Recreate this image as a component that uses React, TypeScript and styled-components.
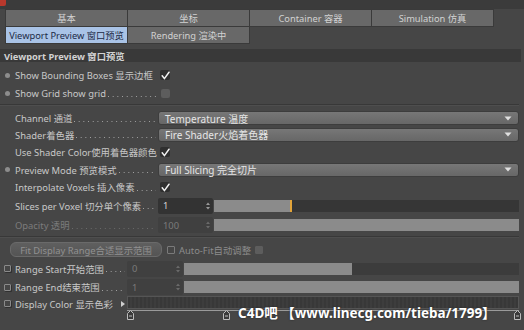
import React from 'react';
import styled, { createGlobalStyle } from 'styled-components';

const GlobalStyle = createGlobalStyle`
  html, body {
    margin: 0;
    padding: 0;
    background: #464646;
  }
  body {
    font-family: "Noto Sans", "Noto Sans CJK SC", sans-serif;
    font-size: 9px;
    color: #cacaca;
  }
`;

const Panel = styled.div`
  position: relative;
  width: 524px;
  height: 330px;
  overflow: hidden;
  background: #464646;
`;

const TopStrip = styled.div`
  height: 9px;
  background: #3b3b3b;
  display: flex;
`;

const RedCorner = styled.div`
  width: 6px;
  height: 6px;
  background: #b8382c;
  border-bottom-right-radius: 2px;
`;

const Tabs = styled.div`
  margin-left: 5px;
  display: flex;
  flex-direction: column;
`;

const TabRow = styled.div`
  display: flex;
  & + & {
    margin-top: -1px;
  }
`;

const Tab = styled.div<{ $active?: boolean }>`
  width: 121px;
  height: 16px;
  border: 1px solid #3a3a3a;
  background: ${p => (p.$active ? '#a9c3e6' : '#686868')};
  color: ${p => (p.$active ? '#1c2a45' : '#d2d2d2')};
  display: flex;
  align-items: center;
  justify-content: center;
  white-space: nowrap;
  font-size: 9.3px;
  & + & {
    margin-left: -1px;
  }
`;

const Header = styled.div`
  margin-top: 5px;
  height: 13px;
  margin-right: 3px;
  background: #393939;
  padding-left: 4px;
  display: flex;
  align-items: center;
  font-weight: 700;
  font-size: 9.3px;
  color: #d2d2d2;
`;

const Body = styled.div`
  padding: 4px 5px 0 0;
  display: flex;
  flex-direction: column;
  font-size: 9.4px;
`;

const Row = styled.div<{ $h: number; $top?: boolean }>`
  height: ${p => p.$h}px;
  display: flex;
  align-items: ${p => (p.$top ? 'flex-start' : 'center')};
`;

const MarkerSlot = styled.div<{ $mt?: number }>`
  width: 15px;
  flex-shrink: 0;
  display: flex;
  justify-content: center;
  padding-right: 1px;
  box-sizing: border-box;
  margin-top: ${p => p.$mt ?? 0}px;
`;

const Bullet = styled.span`
  width: 5px;
  height: 5px;
  border-radius: 50%;
  background: #8d8d8d;
`;

const KeyBox = styled.span`
  width: 5px;
  height: 5px;
  border: 1px solid #8a8a8a;
  border-radius: 1px;
  box-shadow: 1px 1px 0 #303030;
`;

const Label = styled.div<{ $w: number; $dim?: boolean; $mt?: number }>`
  width: ${p => p.$w}px;
  flex-shrink: 0;
  display: flex;
  align-items: center;
  white-space: nowrap;
  overflow: hidden;
  margin-top: ${p => p.$mt ?? 0}px;
  color: ${p => (p.$dim ? '#7c7c7c' : '#c8c8c8')};
`;

const LabelText = styled.span`
  flex-shrink: 0;
`;

const Leader = styled.span<{ $dim?: boolean }>`
  flex: 1;
  min-width: 0;
  height: 1px;
  margin: 0 2px 0 2px;
  transform: translateY(3px);
  background-image: linear-gradient(90deg, ${p => (p.$dim ? '#6c6c6c' : '#a4a4a4')} 0 1px, transparent 1px);
  background-size: 4.7px 1px;
  background-repeat: repeat-x;
`;

const Value = styled.div`
  flex: 1;
  display: flex;
  align-items: center;
  min-width: 0;
`;

const CheckBox = styled.span<{ $on?: boolean }>`
  margin-left: ${p => (p.$on ? 2 : 3)}px;
  width: ${p => (p.$on ? 10 : 9)}px;
  height: ${p => (p.$on ? 10 : 9)}px;
  border-radius: 2px;
  background: ${p => (p.$on ? '#2f2f2f' : '#5d5d5d')};
  display: flex;
  align-items: center;
  justify-content: center;
`;

const Dropdown = styled.div`
  flex: 1;
  height: 14px;
  box-sizing: border-box;
  border-radius: 3px;
  background: linear-gradient(#777777, #676767);
  border: 1px solid #3d3d3d;
  color: #e6e6e6;
  font-size: 10px;
  display: flex;
  align-items: center;
  justify-content: space-between;
  padding: 0 6px;
  white-space: nowrap;
`;

const NumberField = styled.div<{ $dim?: boolean; $w?: number }>`
  width: ${p => p.$w ?? 55}px;
  height: 16px;
  box-sizing: border-box;
  flex-shrink: 0;
  border-radius: 2px;
  background: ${p => (p.$dim ? '#404040' : '#333333')};
  color: ${p => (p.$dim ? '#7a7a7a' : '#d4d4d4')};
  display: flex;
  align-items: center;
  justify-content: space-between;
  padding: 0 3px 0 5px;
`;

const Slider = styled.div<{ $dark?: boolean }>`
  flex: 1;
  height: 12px;
  margin-left: 1px;
  background: ${p => (p.$dark ? '#363636' : '#3c3c3c')};
  display: flex;
`;

const SliderFill = styled.div<{ $pct: number; $marker?: boolean }>`
  width: ${p => p.$pct}%;
  height: 100%;
  background: #8b8b8b;
  box-sizing: border-box;
  border-right: ${p => (p.$marker ? '2px solid #e2a43a' : 'none')};
`;

const Separator = styled.div<{ $mt: number; $mb: number }>`
  height: 1px;
  background: #383838;
  border-bottom: 1px solid #4e4e4e;
  margin: ${p => p.$mt}px 0 ${p => p.$mb}px 0;
`;

const FitButton = styled.div`
  margin-left: 10px;
  width: 152px;
  height: 15px;
  box-sizing: border-box;
  border-radius: 6px;
  border: 1px solid #6a6a6a;
  background: linear-gradient(#5f5f5f, #545454);
  color: #919191;
  display: flex;
  align-items: center;
  justify-content: center;
  white-space: nowrap;
`;

const SmallBox = styled.span<{ $fill?: boolean }>`
  width: 6px;
  height: 6px;
  border: 1px solid ${p => (p.$fill ? '#5d5d5d' : '#7a7a7a')};
  background: ${p => (p.$fill ? '#5d5d5d' : 'transparent')};
  border-radius: 1px;
  flex-shrink: 0;
`;

const AutoFit = styled.div`
  margin-left: 5px;
  display: flex;
  align-items: center;
  gap: 4px;
  color: #8c8c8c;
  white-space: nowrap;
`;

const Arrow = styled.span`
  margin-left: auto;
  margin-right: 2px;
  width: 0;
  height: 0;
  border-top: 3px solid transparent;
  border-bottom: 3px solid transparent;
  border-left: 4px solid #d0d0d0;
`;

const GradientWrap = styled.div`
  flex: 1;
  display: flex;
  flex-direction: column;
  position: relative;
  height: 25px;
`;

const GradientBar = styled.div`
  height: 13px;
  box-sizing: border-box;
  border: 1px solid #555555;
  background: repeating-linear-gradient(90deg, #383838 0 2px, #3d3d3d 2px 4px);
`;

const KnobLine = styled.div`
  margin-top: 1px;
  height: 1px;
  background: #9a9a9a;
`;

const Knob = styled.span<{ $x: number }>`
  position: absolute;
  top: 14px;
  left: ${p => p.$x}px;
  width: 7px;
  height: 10px;
  display: flex;
`;

const Watermark = styled.div`
  position: absolute;
  left: 238px;
  top: 302px;
  font-family: "Noto Sans", "Noto Sans CJK SC", sans-serif;
  font-weight: 700;
  font-size: 13.5px;
  color: #ffffff;
  white-space: nowrap;
  text-shadow: 0 0 2px #222;
`;

const Check = () => (
  <svg width="9" height="9" viewBox="0 0 9 9">
    <path d="M1.2 4.8 L3.4 7.6 L8 1.2" stroke="#f2f2f2" strokeWidth="1.5" fill="none" strokeLinecap="round" />
  </svg>
);

const DownArrow = () => (
  <svg width="8" height="5" viewBox="0 0 8 5">
    <path d="M0.5 0.5 H7.5 L4 4.5 Z" fill="#e0e0e0" />
  </svg>
);

const Spin = ({ color }: { color: string }) => (
  <svg width="4" height="8" viewBox="0 0 4 8">
    <path d="M0 3 L2 0.5 L4 3 Z M0 5 L2 7.5 L4 5 Z" fill={color} />
  </svg>
);

const KnobIcon = () => (
  <svg width="7" height="10" viewBox="0 0 7 10">
    <path d="M0.5 9.5 V3.5 L3.5 0.5 L6.5 3.5 V9.5 Z" fill="#3a3a3a" stroke="#bdbdbd" strokeWidth="1" />
    <path d="M2 6 H5" stroke="#bdbdbd" strokeWidth="1" />
  </svg>
);

type Marker = 'bullet' | 'key' | 'none';

const Field = ({
  marker,
  text,
  w,
  dim,
  dots = true,
}: {
  marker: Marker;
  text: string;
  w: number;
  dim?: boolean;
  dots?: boolean;
}) => (
  <>
    <MarkerSlot>
      {marker === 'bullet' && <Bullet />}
      {marker === 'key' && <KeyBox />}
    </MarkerSlot>
    <Label $w={w} $dim={dim}>
      <LabelText>{text}</LabelText>
      {dots && <Leader $dim={dim} />}
    </Label>
  </>
);

const Checked = () => (
  <Value>
    <CheckBox $on>
      <Check />
    </CheckBox>
  </Value>
);

const App = () => {
  return (
    <Panel>
      <GlobalStyle />
      <TopStrip>
        <RedCorner />
      </TopStrip>
      <Tabs>
        <TabRow>
          <Tab>基本</Tab>
          <Tab>坐标</Tab>
          <Tab>Container 容器</Tab>
          <Tab>Simulation 仿真</Tab>
        </TabRow>
        <TabRow>
          <Tab $active>Viewport Preview 窗口预览</Tab>
          <Tab>Rendering 渲染中</Tab>
        </TabRow>
      </Tabs>
      <Header>Viewport Preview 窗口预览</Header>
      <Body>
        <Row $h={18}>
          <Field marker="bullet" text="Show Bounding Boxes 显示边框" w={143} dots={false} />
          <Checked />
        </Row>
        <Row $h={18}>
          <Field marker="bullet" text="Show Grid show grid" w={143} />
          <Value>
            <CheckBox />
          </Value>
        </Row>
        <Separator $mt={2} $mb={4} />
        <Row $h={16}>
          <Field marker="none" text="Channel 通道" w={143} />
          <Dropdown>
            Temperature 温度
            <DownArrow />
          </Dropdown>
        </Row>
        <Row $h={17}>
          <Field marker="none" text="Shader着色器" w={143} />
          <Dropdown>
            Fire Shader火焰着色器
            <DownArrow />
          </Dropdown>
        </Row>
        <Row $h={18}>
          <Field marker="none" text="Use Shader Color使用着色器颜色" w={145} dots={false} />
          <CheckBox $on style={{ marginLeft: 0 }}>
            <Check />
          </CheckBox>
        </Row>
        <Row $h={17}>
          <Field marker="bullet" text="Preview Mode 预览模式" w={143} />
          <Dropdown>
            Full Slicing 完全切片
            <DownArrow />
          </Dropdown>
        </Row>
        <Row $h={18}>
          <Field marker="none" text="Interpolate Voxels 插入像素" w={143} />
          <Checked />
        </Row>
        <Row $h={19}>
          <Field marker="none" text="Slices per Voxel 切分单个像素" w={143} />
          <Value>
            <NumberField>
              1
              <Spin color="#9a9a9a" />
            </NumberField>
            <Slider $dark>
              <SliderFill $pct={25.6} $marker />
            </Slider>
          </Value>
        </Row>
        <Row $h={20}>
          <Field marker="none" text="Opacity 透明" w={143} dim />
          <Value>
            <NumberField $dim>
              100
              <Spin color="#6a6a6a" />
            </NumberField>
            <Slider>
              <SliderFill $pct={100} />
            </Slider>
          </Value>
        </Row>
        <Separator $mt={1} $mb={2} />
        <Row $h={19}>
          <FitButton>Fit Display Range合适显示范围</FitButton>
          <AutoFit>
            <SmallBox />
            Auto-Fit自动调整
            <SmallBox $fill />
          </AutoFit>
        </Row>
        <Row $h={19}>
          <Field marker="key" text="Range Start开始范围" w={112} />
          <Value>
            <NumberField $dim $w={56}>
              0
              <Spin color="#6a6a6a" />
            </NumberField>
            <Slider>
              <SliderFill $pct={50.1} />
            </Slider>
          </Value>
        </Row>
        <Row $h={18}>
          <Field marker="key" text="Range End结束范围" w={112} />
          <Value>
            <NumberField $dim $w={56}>
              1
              <Spin color="#6a6a6a" />
            </NumberField>
            <Slider>
              <SliderFill $pct={100} />
            </Slider>
          </Value>
        </Row>
        <Row $h={25} $top>
          <MarkerSlot $mt={4}>
            <KeyBox />
          </MarkerSlot>
          <Label $w={112} $mt={1}>
            <LabelText>Display Color 显示色彩</LabelText>
            <Arrow />
          </Label>
          <GradientWrap>
            <GradientBar />
            <KnobLine />
            <Knob $x={0}>
              <KnobIcon />
            </Knob>
            <Knob $x={96}>
              <KnobIcon />
            </Knob>
            <Knob $x={387}>
              <KnobIcon />
            </Knob>
          </GradientWrap>
        </Row>
      </Body>
      <Watermark>C4D吧 【www.linecg.com/tieba/1799】</Watermark>
    </Panel>
  );
};

export default App;
